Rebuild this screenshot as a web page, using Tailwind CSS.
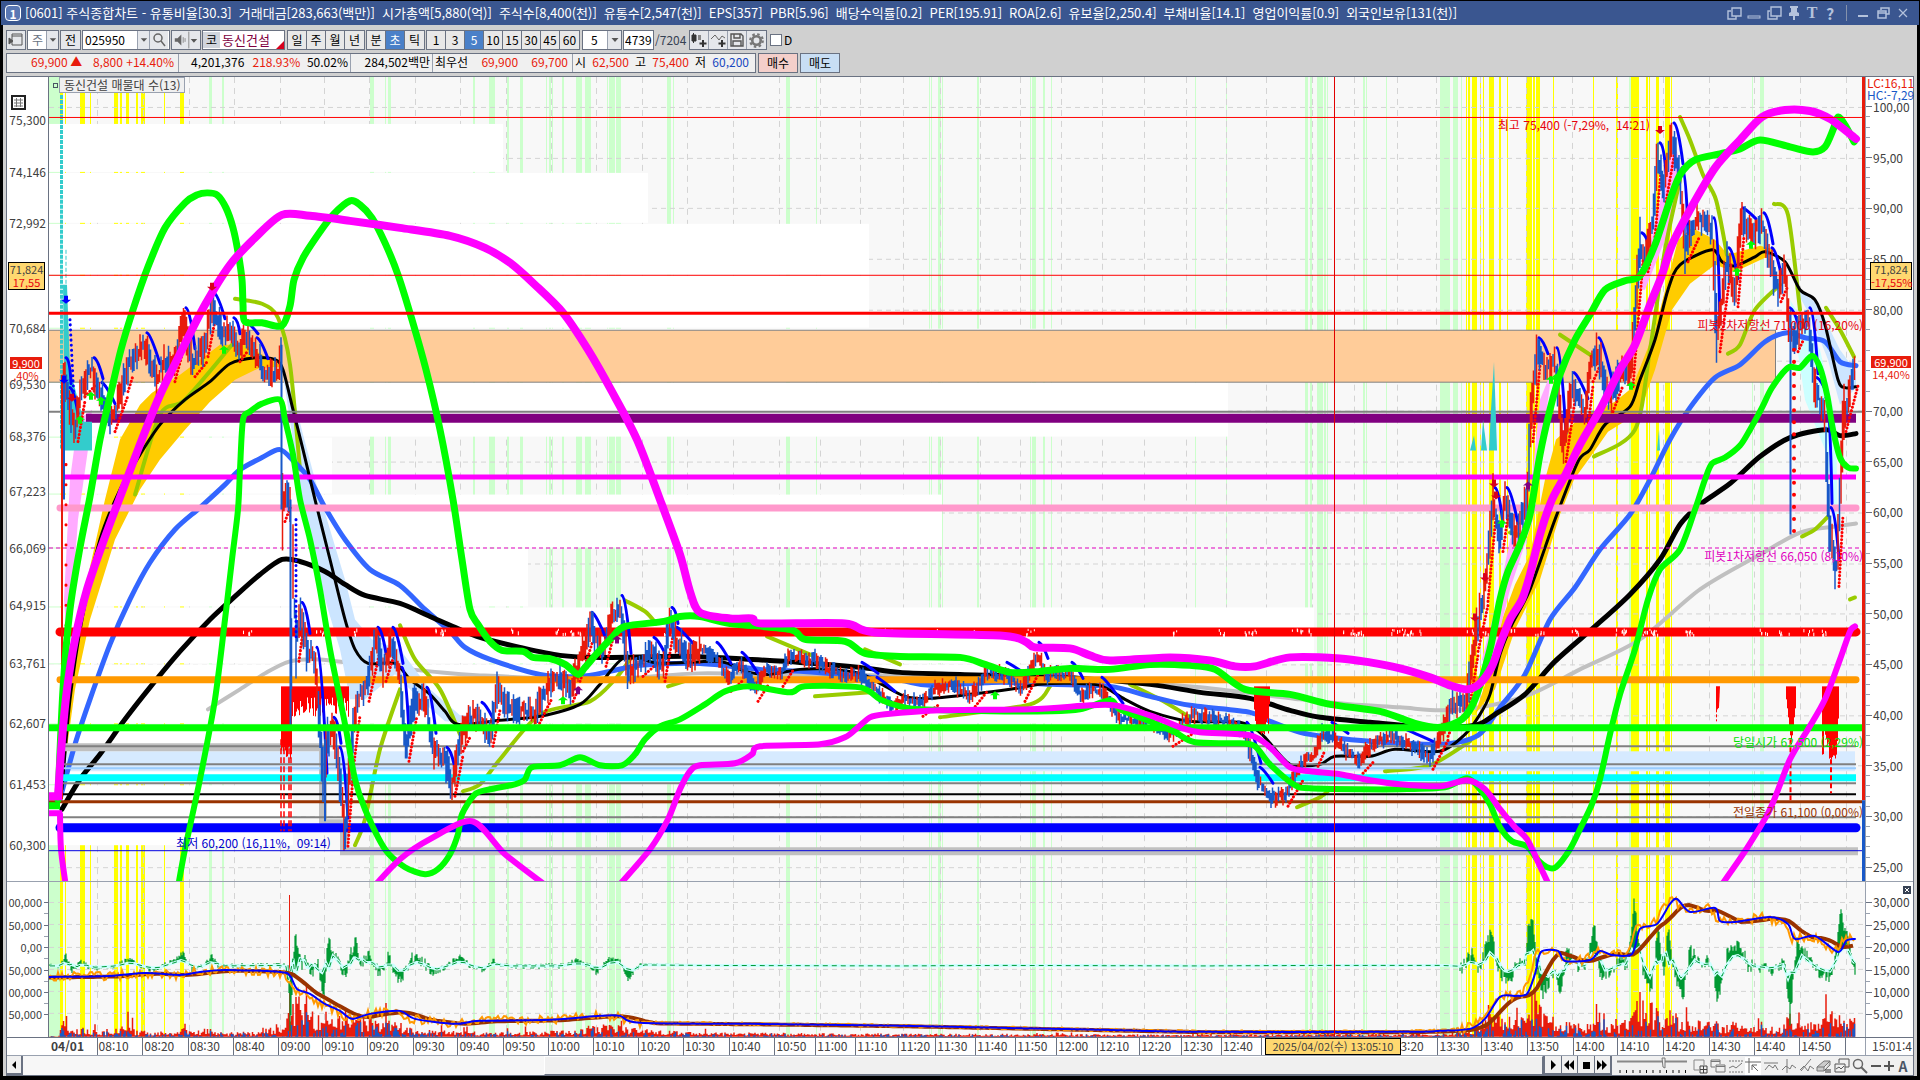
<!DOCTYPE html>
<html lang="ko">
<head>
<meta charset="utf-8">
<title>[0601] 주식종합차트</title>
<script src="https://cdn.jsdelivr.net/npm/@tailwindcss/browser@4"></script>
</head>
<body class="h-screen overflow-hidden bg-black pt-px pb-1 flex flex-col text-xs leading-4 text-black whitespace-nowrap font-['Noto_Sans_CJK_KR',sans-serif]">
<header class="h-6 shrink-0 mx-px bg-[#3a5690] text-white flex items-center pl-1 pr-2 text-[13px]">
  <span class="w-4 h-4 mr-1 rounded-sm border border-white bg-[#5a78b4] grid place-items-center text-xs font-bold">1</span>
  <h1 id="title" class="flex gap-[7px]"></h1>
  <div class="ml-auto flex items-center gap-1 text-[#b4c2dc]">
    <button aria-label="복제" class="w-4 h-4"><svg viewBox="0 0 16 16" fill="none" stroke="currentColor" stroke-width="1.4"><path d="M5 6H2v8h8v-3M6 3h9v8H6z"/></svg></button>
    <button aria-label="접기" class="w-4 h-4"><svg viewBox="0 0 16 16" fill="none" stroke="currentColor"><rect x="2" y="11" width="12" height="2"/></svg></button>
    <button aria-label="창" class="w-4 h-4"><svg viewBox="0 0 16 16" fill="none" stroke="currentColor" stroke-width="1.4"><path d="M4 6H2v8h9v-3M5 2h10v9H5z"/></svg></button>
    <button aria-label="고정" class="w-4 h-4"><svg viewBox="0 0 16 16" fill="currentColor"><path d="M4 1h8v2h-1v4l2 1v3H3V8l2-1V3H4zM7 11h2v4H7z"/></svg></button>
    <button class="w-3 font-['Liberation_Serif',serif] text-base font-bold">T</button>
    <button class="w-4 text-base font-bold">?</button>
    <span class="w-px h-4 bg-[#8592ac] mx-1"></span>
    <button aria-label="최소화" class="w-4 h-4"><svg viewBox="0 0 16 16" fill="currentColor"><rect x="3" y="10" width="10" height="2"/></svg></button>
    <button aria-label="이전 크기" class="w-4 h-4"><svg viewBox="0 0 16 16" fill="none" stroke="currentColor" stroke-width="1.5"><path d="M6 5V3h8v6h-3M3 6h8v7H3zM3 8h8"/></svg></button>
    <button aria-label="닫기" class="w-4 h-4"><svg viewBox="0 0 16 16" stroke="currentColor" stroke-width="1.2"><path d="m4 4 8 8m0-8-8 8"/></svg></button>
  </div>
</header>
<main class="flex-1 min-h-0 mx-[3px] bg-[#d0d0d0] flex flex-col pt-[5px]">
  <div id="toolbar" class="h-5 ml-[3px] flex items-stretch gap-px">
    <button aria-label="화면 목록" class="w-5 border border-gray-500 bg-gray-200 grid place-items-center"><svg class="w-4 h-4" viewBox="0 0 16 16" fill="none" stroke="#555"><path d="M4 2h10v11H4zM4 4h10"/><path d="M1 6v6l4-3z" fill="#555"/></svg></button>
    <label class="w-[32px] border border-gray-500 bg-white flex items-center text-gray-500 pl-1"><select aria-label="시장" class="appearance-none w-[14px] outline-none"><option>주</option></select><svg class="ml-auto w-[12px] h-full bg-gray-200 border-l border-gray-400" viewBox="0 0 12 18"><path d="M3 7h7l-3.500 4z" fill="#555"/></svg></label>
    <button class="w-[21px] border border-gray-500 bg-gray-200">전</button>
    <span class="w-[88px] border border-gray-500 bg-white flex"><input aria-label="종목코드" value="025950" class="w-[54px] pl-0.5 outline-none"><svg class="w-[13px] h-full bg-gray-200 border-x border-gray-400" viewBox="0 0 12 18"><path d="M3 7h7l-3.500 4z" fill="#555"/></svg><svg class="w-[18px] h-full bg-gray-200" viewBox="0 0 18 18" fill="none" stroke="#666" stroke-width="1.500"><circle cx="8" cy="7" r="4"/><path d="m11 10 4 5"/></svg></span>
    <button aria-label="소리" class="w-[30px] border border-gray-500 bg-gray-200"><svg class="w-full h-full" viewBox="0 0 30 18"><path d="M3 7h3l4-4v12l-4-4H3z" fill="#666"/><path d="M12 6v6M14 7v4" stroke="#888"/><path d="M18 0v18" stroke="#888"/><path d="M20 8h7l-3.500 4z" fill="#555"/></svg></button>
    <span class="w-[83px] border border-gray-500 bg-white flex items-center relative"><b class="w-[17px] bg-gray-300 text-center font-normal">코</b><span class="pl-0.5 text-[13px] text-[#800040]">동신건설</span><svg class="absolute right-0 bottom-0 w-2 h-2" viewBox="0 0 8 8"><path d="M8 0v8H0z" fill="#d8001c"/></svg></span>
    <div id="periods" class="flex border border-gray-500 divide-x divide-gray-500 ml-px"></div>
    <div id="kinds" class="flex border border-gray-500 divide-x divide-gray-500"></div>
    <div id="mins" class="flex border border-gray-500 divide-x divide-gray-500"></div>
    <label class="w-[40px] ml-px border border-gray-500 bg-white flex items-center pl-2"><select aria-label="주기" class="appearance-none w-[14px] outline-none"><option>5</option></select><svg class="ml-auto w-[14px] h-full bg-gray-200 border-l border-gray-400" viewBox="0 0 12 18"><path d="M3 7h7l-3.500 4z" fill="#555"/></svg></label>
    <input aria-label="표시 봉수" value="4739" class="w-[31px] border border-gray-500 bg-white pl-px outline-none">
    <span class="w-[33px] self-center text-gray-700">/7204</span>
    <div class="flex border border-gray-500 divide-x divide-gray-400 bg-gray-200">
      <button aria-label="봉 추가" class="w-[19px]"><svg viewBox="0 0 18 18"><path d="M2 4h4v6H2zM3.500 2v10" fill="#333" stroke="#333"/><path d="M8 4h3v5H8z" fill="#888"/><path d="M13 9v7M9.500 12.500h7" stroke="#333" stroke-width="2"/></svg></button>
      <button aria-label="지표 추가" class="w-[19px]"><svg viewBox="0 0 18 18" fill="none"><path d="m2 8 4-4 4 5 3-4 3 2" stroke="#666"/><path d="M13 9v7M9.500 12.500h7" stroke="#333" stroke-width="2"/></svg></button>
      <button aria-label="저장" class="w-[19px]"><svg viewBox="0 0 18 18" fill="none" stroke="#555" stroke-width="1.400"><path d="M3 3h10l2 2v10H3zM6 3v4h6V3M5 15v-5h8v5"/></svg></button>
      <button aria-label="설정" class="w-[19px]"><svg viewBox="0 0 18 18" fill="none" stroke="#777"><circle cx="9" cy="9" r="4" stroke-width="2.500"/><circle cx="9" cy="9" r="6" stroke-dasharray="2.400 2.300" stroke-width="2"/></svg></button>
    </div>
    <label class="flex items-center gap-0.5 ml-0.5"><input type="checkbox" class="appearance-none w-3 h-3 bg-white border border-gray-500">D</label>
  </div>
  <div class="h-5 mt-[3px] ml-[3px] flex gap-0.5">
    <div class="flex items-center w-[750px] border border-gray-500 bg-[#f0f0f0] divide-x divide-gray-400">
      <p class="w-[172px] h-full flex justify-between pl-6 pr-1 text-[#e81c0c]"><span>69,900 ▲</span><span>8,800 +14.40%</span></p>
      <p class="w-[172px] h-full flex justify-between pl-3 pr-0.5"><span>4,201,376</span><span><span class="text-[#e81c0c]">218.93%</span>&nbsp; 50.02%</span></p>
      <p class="w-[82px] h-full pr-0.5 text-right">284,502백만</p>
      <p class="w-[140px] h-full flex justify-between pl-0.5 pr-1"><span>최우선</span><span class="text-[#e81c0c]">69,900</span><span class="text-[#e81c0c]">69,700</span></p>
      <p class="flex-1 h-full flex justify-between pl-0.5 pr-1.5"><span>시</span><span class="text-[#e81c0c]">62,500</span><span>고</span><span class="text-[#e81c0c]">75,400</span><span>저</span><span class="text-[#1848c0]">60,200</span></p>
    </div>
    <button class="w-10 border border-gray-500 bg-[#f4cfca]">매수</button>
    <button class="w-10 border border-gray-500 bg-[#c8def4]">매도</button>
  </div>
  <section class="flex-1 min-h-0 mt-[3px] mx-[3px] border border-gray-500 bg-white flex flex-col text-[#404040]">
    <div class="flex min-h-0 basis-0 grow-[805] border-b border-gray-400">
      <div id="axL" class="w-[42px] shrink-0 border-r border-gray-500 relative flex flex-col pr-0.5">
        <button aria-label="표" class="absolute left-1 top-[18px] w-[15px] h-[15px]"><svg viewBox="0 0 15 15" fill="none" stroke="#222"><path d="M1 1h13v13H1z" stroke-width="2"/><path d="M3 5h9M3 8h9M3 11h9M5.500 3v9M9.500 3v9" stroke="#777"/></svg></button>
        <div class="absolute z-10 left-px w-[37px] top-[23%] border border-black bg-[#ffd870] text-center text-[11px] leading-[13px]"><div>71,824</div><div class="text-red-600">17,55</div></div>
        <div class="absolute z-10 left-[3px] w-[32px] top-[34.800%] leading-[12px] text-center text-[11px]"><div class="bg-[#e81c0c] text-white">9,900</div><div class="text-[#e81c0c]">,40%</div></div>
      </div>
      <div class="flex-1 min-w-0 relative overflow-hidden bg-[#f8f8f8]">
        <svg id="main" class="block w-full h-full" viewBox="49 77 1816 805" preserveAspectRatio="none"></svg>
        <span class="absolute left-1 top-[6px] w-[5px] h-[5px] border border-gray-600"></span>
        <span class="absolute left-[10px] top-0 bg-[#f0f0f0] border border-gray-400 px-1 leading-[14px]">동신건설 매물대 수(13)</span>
        <span class="absolute right-[215px] top-[5%] text-red-600">최고 75,400 (-7,29%,&nbsp; 14:21)</span>
        <span class="absolute right-0.5 top-[29.800%] text-red-600">피봇2차저항선 71,000 (16,20%)</span>
        <span class="absolute right-0.5 top-[58.600%] text-[#e000c0]">피봇1차저항선 66,050 (8,10%)</span>
        <span class="absolute right-0.5 top-[81.700%] text-[#00e000]">당일시가 62,500 (2,29%)</span>
        <span class="absolute right-0.5 top-[90.400%] text-[#993300]">전일종가 61,100 (0,00%)</span>
        <span class="absolute left-[7%] top-[94.200%] text-[#0000cc]">최저 60,200 (16,11%,&nbsp; 09:14)</span>
      </div>
      <div id="axR" class="w-[48px] shrink-0 border-l border-gray-400 relative flex flex-col">
        <div class="absolute left-px top-0 leading-3"><div class="text-[#e81c0c]">LC:16,11</div><div class="text-[#1858c8]">HC:-7,29</div></div>
        <div class="absolute z-10 left-1 w-[42px] top-[23%] border border-black bg-[#ffd870] text-center text-[11px] leading-[13px]"><div>71,824</div><div class="text-red-600">-17,55%</div></div>
        <div class="absolute z-10 left-[5px] w-10 top-[34.700%] leading-[12px] text-center text-[11px]"><div class="bg-[#e81c0c] text-white">69,900</div><div class="text-[#e81c0c]">14,40%</div></div>
      </div>
    </div>
    <div class="flex min-h-0 basis-0 grow-[155] border-b border-gray-500">
      <div id="axL2" class="w-[42px] shrink-0 border-r border-gray-500 flex flex-col text-[11px]"></div>
      <div class="flex-1 min-w-0 bg-[#f8f8f8]"><svg id="vol" class="block w-full h-full" viewBox="49 883 1816 155" preserveAspectRatio="none"></svg></div>
      <div id="axR2" class="w-[48px] shrink-0 border-l border-gray-400 relative flex flex-col"><button aria-label="지표 닫기" class="absolute right-0.5 top-1 w-2 h-2 bg-gray-700 text-white"><svg class="block" viewBox="0 0 8 8" stroke="white"><path d="m2 2 4 4m0-4-4 4"/></svg></button></div>
    </div>
    <div class="h-[18px] shrink-0 flex border-b border-gray-400 relative pl-[42px]">
      <div id="xax" class="flex flex-1 min-w-0"></div>
      <div class="w-[48px] border-l border-gray-400 pl-1.5">15:01:4</div>
      <div class="absolute left-[66%] top-0 w-[136px] h-[17px] bg-[#ffd870] border border-black text-center text-[11px] leading-[15px]">2025/04/02(수) 13:05:10</div>
    </div>
    <footer class="h-[19px] shrink-0 bg-[#f0f0f0] flex items-stretch">
      <button aria-label="왼쪽" class="w-4 border-r-2 border-b-2 border-gray-500 grid place-items-center"><svg class="w-2 h-2" viewBox="0 0 8 8"><path d="M6 0v8L2 4z"/></svg></button>
      <div class="flex-[523] bg-[#f7f7f7]"></div>
      <div class="flex-[1000] border border-white border-r-gray-500 border-b-gray-500 bg-[#f0f0f0]"></div>
      <div class="flex w-[69px] divide-x divide-gray-500 border-l-2 border-b-2 border-r-2 border-gray-500">
        <button aria-label="재생" class="flex-1 grid place-items-center"><svg class="w-3 h-3" viewBox="0 0 12 12"><path d="M4 1v10l5-5z"/></svg></button>
        <button aria-label="뒤로" class="flex-1 grid place-items-center"><svg class="w-3 h-3" viewBox="0 0 12 12"><path d="M6 1v10L1 6zM11 1v10L6 6z"/></svg></button>
        <button aria-label="정지" class="flex-1 grid place-items-center"><svg class="w-3 h-3" viewBox="0 0 12 12"><path d="M3 3h7v7H3z"/></svg></button>
        <button aria-label="앞으로" class="flex-1 grid place-items-center"><svg class="w-3 h-3" viewBox="0 0 12 12"><path d="M1 1v10l5-5zM6 1v10l5-5z"/></svg></button>
      </div>
      <svg class="w-[80px] h-[18px]" viewBox="0 0 80 18"><path d="M5 5.500h70" stroke="#888" stroke-width="2"/><path d="M8 14v3M14.500 14v3M21 14v3M28 14v3M34.500 14v3M41 14v3M48 14v3M54.500 14v3M61 14v3M67 14v3M73.500 14v3" stroke="#111"/><path d="M50 2h3v10l-2-1z" fill="#eee" stroke="#777"/></svg>
      <div class="flex items-center w-[221px] justify-between pr-1 text-gray-600">
        <button aria-label="격자 추가" class="w-4 h-4"><svg viewBox="0 0 16 16" fill="none" stroke="#888"><path d="M7 12H2V2h10v5"/><path d="M8 8h7v7H8zM8 11.500h7M11.500 8v7" stroke="#444"/></svg></button>
        <button aria-label="겹치기" class="w-4 h-4"><svg viewBox="0 0 16 16" fill="none" stroke="#777"><path d="M5 9H1V2h9v4M1 3.500h9M6 7h9v7H6zM6 8.500h9"/></svg></button>
        <button aria-label="자동 추세" class="w-4 h-4"><svg viewBox="0 0 16 16" fill="none" stroke="#777"><path d="M1 3h14M1 14h14" stroke-dasharray="2 1"/><path d="m1 10 4-2 3 2 6-5"/></svg></button>
        <button aria-label="십자선" class="w-4 h-[18px] bg-white"><svg viewBox="0 0 16 16" fill="none" stroke="#666"><path d="M0 4h16M4 0v15M13 13 7 7m0 5V7h5"/></svg></button>
        <button aria-label="수평선" class="w-4 h-4"><svg viewBox="0 0 16 16" fill="none" stroke="#777"><path d="M1 5h14M2 12l4-5 4 3 2-3 3 5"/></svg></button>
        <button aria-label="수직선" class="w-4 h-4"><svg viewBox="0 0 16 16" fill="none" stroke="#777"><path d="M6 1v14M1 12l4-4 4 3 2-4 4 3"/></svg></button>
        <button aria-label="추세선" class="w-4 h-4"><svg viewBox="0 0 16 16" fill="none" stroke="#777"><path d="M2 13 12 1M1 12l4-4 4 5 2-5 4 3" /></svg></button>
        <button aria-label="지우개" class="w-4 h-4"><svg viewBox="0 0 16 16" fill="none" stroke="#777"><path d="m1 9 7-6h6l-6 6zM1 9v4h7V9M8 13l6-6V3" fill="#ccc"/><path d="M10 11v4M12 11v4M14 11v4" stroke="#333"/></svg></button>
        <button aria-label="차트 겹침" class="w-4 h-4"><svg viewBox="0 0 16 16" fill="none" stroke="#555"><path d="M5 5V1h10v8h-4M1 6h10v8H1zM2 11l3-2 2 2 3-3"/></svg></button>
        <button aria-label="확대경" class="w-4 h-4"><svg viewBox="0 0 16 16" fill="none" stroke="#666" stroke-width="1.500"><circle cx="6" cy="6" r="4.500"/><path d="m9 9 6 6" stroke-width="2"/></svg></button>
        <button aria-label="축소" class="w-3 h-4"><svg viewBox="0 0 12 16"><path d="M1 8h10" stroke="#555" stroke-width="2"/></svg></button>
        <button aria-label="확대" class="w-3 h-4"><svg viewBox="0 0 12 16"><path d="M1 8h10M6 3v10" stroke="#555" stroke-width="2"/></svg></button>
        <button class="text-sm font-bold w-3">A</button>
      </div>
    </footer>
  </section>
</main>
<script>
const $ = id => document.getElementById(id);
let seed = 7;
const rnd = () => (seed = (seed * 16807) % 2147483647) / 2147483647;

/* title and button groups */
'[0601] 주식종합차트 - 유통비율[30.3]|거래대금[283,663(백만)]|시가총액[5,880(억)]|주식수[8,400(천)]|유통수[2,547(천)]|EPS[357]|PBR[5.96]|배당수익률[0.2]|PER[195.91]|ROA[2.6]|유보율[2,250.4]|부채비율[14.1]|영업이익률[0.9]|외국인보유[131(천)]'
  .split('|').forEach(t => $('title').insertAdjacentHTML('beforeend', `<span>${t}</span>`));
const group = (id, items, on) => $(id).innerHTML = items.map(t => `<button class="w-[19px] ${t === on ? 'bg-[#4a80c8] text-white' : 'bg-[#e8e8e8]'}">${t}</button>`).join('');
group('periods', ['일','주','월','년']);
group('kinds', ['분','초','틱'], '초');
group('mins', ['1','3','5','10','15','30','45','60'], '5');

/* axes: zero-height labels between growing spacers */
function axis(id, top, bottom, rows, right) {
  let y = top, h = '';
  rows.forEach(([p, t], i) => {
    const minor = right || id === 'axL2';
    const n = i && minor ? (id === 'axR' ? 4 : 1) : 0;
    h += `<div class="basis-0 min-h-0 flex flex-col justify-evenly ${right ? 'items-start' : 'items-end'}" style="flex-grow:${p - y}">${'<i class="w-1 h-px bg-gray-400"></i>'.repeat(n)}</div>`;
    h += right ? `<div class="h-0 flex items-center gap-px"><i class="w-[6px] h-px bg-gray-500 shrink-0"></i><span>${t}</span></div>`
      : `<div class="h-0 flex items-center justify-end gap-0.5"><span>${t}</span>${id === 'axL2' ? '<i class="w-1 h-px bg-gray-500 shrink-0"></i>' : ''}</div>`;
    y = p;
  });
  $(id).insertAdjacentHTML('beforeend', h + `<div class="basis-0" style="flex-grow:${bottom - y}"></div>`);
}
axis('axL', 77, 882, [[120,'75,300'],[172,'74,146'],[223,'72,992'],[328,'70,684'],[384,'69,530'],[436,'68,376'],[491,'67,223'],[548,'66,069'],[606,'64,915'],[664,'63,761'],[724,'62,607'],[785,'61,453'],[846,'60,300']]);
axis('axR', 77, 882, Array.from({length:16}, (_, i) => [107 + i * 50.73, (100 - i * 5) + ',00']).filter(r => r[1] !== '75,00'), true);
axis('axL2', 883, 1038, [[903,'00,000'],[926,'50,000'],[948,'0,00'],[971,'50,000'],[993,'00,000'],[1015,'50,000']]);
axis('axR2', 883, 1038, [[903,'30,000'],[926,'25,000'],[948,'20,000'],[971,'15,000'],[993,'10,000'],[1015,'5,000']], true);
const gx = [97,143,189,234,280,324,369,415,460,506,551,596,642,687,733,779,820,860,903,940,980,1020,1061,1102,1144,1186,1226,1266,1312,1354,1397,1436,1480,1526,1572,1617,1663,1709,1754,1800,1846];
const times = '08:10 08:20 08:30 08:40 09:00 09:10 09:20 09:30 09:40 09:50 10:00 10:10 10:20 10:30 10:40 10:50 11:00 11:10 11:20 11:30 11:40 11:50 12:00 12:10 12:20 12:20 12:40'.split(' ');
/* from the ninth hour on there is one label every ten minutes; the cursor stamp hides three of them */
for (let i = 4, t = 540; i < gx.length - 1; i++, t += 10) times[i] = String(t / 60 | 0).padStart(2, '0') + ':' + String(t % 60).padStart(2, '0');
times[27] = times[28] = times[29] = ''; times[30] = '3:20';
let xh = `<div class="basis-0 min-w-0 font-bold pl-0.5" style="flex-grow:48">04/01</div>`;
gx.forEach((x, i) => xh += `<div class="basis-0 min-w-0 border-l border-gray-500 ${i === 30 ? 'pl-2' : 'pl-px'}" style="flex-grow:${(gx[i + 1] || 1865) - x}">${times[i] || ''}</div>`);
$('xax').innerHTML = xh;

/* drawing helpers */
const pts = s => s.trim().split(/\s+/).map(p => p.split(',').map(Number));
function smooth(P) {
  let d = `M${P[0]}`;
  for (let i = 0; i < P.length - 1; i++) {
    const a = P[i - 1] || P[i], b = P[i], c = P[i + 1], e = P[i + 2] || c;
    d += `C${b[0] + (c[0] - a[0]) / 7},${b[1] + (c[1] - a[1]) / 7} ${c[0] - (e[0] - b[0]) / 7},${c[1] - (e[1] - b[1]) / 7} ${c}`;
  }
  return d;
}
const curve = (c, w, s, x = '') => `<path d="${smooth(pts(s))}" fill="none" stroke="${c}" stroke-width="${w}" stroke-linejoin="round" stroke-linecap="round" ${x}/>`;
const rect = (c, x1, x2, y1, y2) => `<rect x="${x1}" y="${y1}" width="${x2 - x1}" height="${y2 - y1}" fill="${c}"/>`;
const hl = (c, w, y, x1 = 60, x2 = 1856, cap = 'butt', x = '') => `<path d="M${x1} ${y}H${x2}" stroke="${c}" stroke-width="${w}" stroke-linecap="${cap}" ${x}/>`;
const area = (c, s) => `<path d="M${s.trim().replace(/\s+/g, 'L')}Z" fill="${c}"/>`;
const at = (P, x) => { let i = 1; while (i < P.length - 1 && P[i][0] < x) i++; const a = P[i - 1], b = P[i]; return a[1] + (b[1] - a[1]) * Math.max(0, Math.min(1, (x - a[0]) / (b[0] - a[0]))); };

const green = [[49,60],[209,212],[222,224],[370,374],[385,386],[388,391],[473,475],[489,495],[507,509],[520,523],[546,547],[549,551],[552,553],[562,564],[576,582],[585,591],[607,608],[609,615],[616,621],[667,671],[673,674],[786,790],[816,817],[929,930],[931,932],[938,941],[942,943],[977,979],[1030,1031],[1032,1036],[1043,1045],[1051,1052],[1195,1196],[1226,1227],[1305,1308],[1310,1312],[1317,1323],[1324,1326],[1327,1328],[1363,1365],[1366,1367],[1386,1387],[1440,1450],[1453,1458],[1461,1462],[1629,1631],[1752,1753],[1760,1764]];
const yellow = [[60,63],[65,66],[80,85],[90,91],[114,118],[120,122],[126,129],[136,138],[141,145],[164,165],[180,184],[1466,1467],[1468,1470],[1472,1477],[1480,1481],[1483,1484],[1489,1494],[1499,1501],[1507,1508],[1526,1532],[1533,1535],[1536,1540],[1553,1554],[1593,1594],[1616,1618],[1631,1639],[1646,1648],[1649,1650],[1656,1659],[1665,1670],[1671,1672]];
const back = (t, b, ys) => green.map(r => rect('#ccffcc', ...r, t, b)).join('') + yellow.map(r => rect('#ffff00', ...r, t, b)).join('')
  + gx.map(x => `<path d="M${x}.5 ${t}V${b}" stroke="#d4d4d4" stroke-dasharray="6 5"/>`).join('')
  + ys.map(y => hl('#d4d4d4', 1, y + .5, 49, 1865, 'butt', 'stroke-dasharray="5 4"')).join('');

/* main panel */
let m = back(77, 882, Array.from({length:16}, (_, i) => Math.round(107 + i * 50.73)));
[[124,172,503],[173,223,648],[224,275,869],[276,328,869],[329,382,1228],[383,437,1228],[438,494,332],[495,548,942],[549,607,528],[608,664,1314],[665,724,1190],[725,785,888],[786,846,293]].forEach(([a, b, x]) => m += rect('#ffffff', 49, x, a, b));
m += `<rect x="48.500" y="330.500" width="1727" height="52" fill="#ffcc99" stroke="#808080"/>`;
m += rect('#d6eaff', 60, 1855, 752, 772);
m += curve('#c0c0c0', 4, '208,710 240,690 265,674 290,662 320,660 360,665 430,672 480,676 600,680 700,674 800,676 940,676 1100,681 1200,688 1300,700 1350,705 1400,708 1440,711 1480,708 1530,695 1580,670 1640,640 1700,590 1760,555 1800,533 1835,527 1856,524');
m += area('#ffcc00', '60,800 70,680 85,590 105,500 120,440 140,405 152,393 180,375 220,345 245,345 283,367 260,368 235,380 210,402 185,430 160,460 140,490 115,540 90,620 75,690');
m += area('#ffcc00', '1475,715 1490,670 1502,620 1515,585 1530,555 1545,480 1556,440 1580,418 1615,402 1632,388 1655,330 1678,240 1692,228 1715,240 1728,255 1760,246 1775,250 1765,258 1735,272 1715,265 1690,284 1672,310 1655,370 1640,412 1608,432 1590,458 1574,480 1560,515 1540,580 1515,630 1495,690');
m += area('#cce5ff', '283,375 293,395 303,435 315,480 330,530 345,580 355,620 372,640 400,650 430,690 460,716 480,715 480,724 445,722 420,700 395,675 365,700 350,700 340,650 325,600 305,520');
m += area('#cce5ff', '1795,288 1815,302 1830,330 1840,350 1856,372 1856,388 1840,405 1828,360 1812,320');
m += area('#ffaaff', '64,600 70,480 78,420 92,410 88,450 78,520 68,660');
m += area('#ffaaff', '1500,590 1510,540 1530,500 1540,400 1552,370 1548,400 1533,520 1510,590 1490,670 1482,660');
m += area('#ffaaff', '1640,290 1665,180 1675,140 1682,180 1665,240 1645,290');
m += area('#ccffff', '1790,300 1805,400 1825,450 1838,540 1836,420 1820,350');
['235,299 262,304 278,318 290,365 300,470','400,626 415,660 440,690 460,735','355,846 365,820 380,750 400,690','463,792 480,785 500,760 540,715 590,702 615,680 630,660','625,601 645,612 656,624','767,637 812,656','668,687 690,680','815,697 870,693','865,650 900,665','940,718 1030,705 1050,687','1130,685 1160,700 1190,718','1297,808 1320,798 1330,790','1385,772 1430,766 1470,742','135,495 160,415 185,400 232,345','1560,335 1593,357','1594,457 1635,430 1650,350 1665,250 1680,180','1680,117 1690,140 1703,175 1716,200 1727,255','1728,354 1740,345 1755,310 1780,285','1774,204 1788,215 1800,310','1826,308 1840,330 1854,357','1802,537 1815,530 1828,517','1850,600 1855,598','1510,533 1525,537'].forEach(s => m += curve('#99cc00', 4, s));
m += curve('#3366ff', 5, '60,800 75,745 90,700 110,645 130,600 150,563 175,530 200,508 225,485 240,470 262,458 280,450 295,463 310,480 325,508 345,540 370,570 400,586 425,610 450,632 465,648 490,660 540,675 580,677 610,672 640,666 700,664 760,670 800,672 850,676 900,681 930,686 1000,683 1050,685 1110,687 1150,697 1190,706 1250,713 1270,722 1300,733 1330,738 1370,742 1440,745 1478,736 1500,708 1525,675 1550,620 1575,588 1600,550 1630,515 1650,480 1670,440 1690,408 1715,378 1740,365 1765,342 1787,333 1805,338 1825,342 1840,362 1856,366');
m += curve('#000000', 5, '62,810 80,780 100,755 125,720 150,688 180,652 210,620 235,597 260,575 282,560 300,562 325,572 345,585 365,596 400,604 430,617 455,628 480,638 520,648 560,656 600,658 690,657 750,660 800,663 860,668 900,673 960,675 1080,679 1150,685 1200,693 1250,699 1290,711 1320,718 1370,723 1430,728 1475,726 1495,715 1525,695 1555,662 1595,627 1630,595 1660,560 1680,525 1700,505 1730,484 1760,457 1790,438 1825,430 1840,436 1856,434');
m += curve('#000000', 3, '62,790 70,700 82,620 100,540 120,490 140,455 160,425 185,400 210,382 230,364 255,358 275,360 283,370 293,410 303,450 315,500 330,560 345,620 355,650 368,664 395,664 410,680 430,695 445,712 458,725 500,721 540,717 580,705 600,685 625,658 660,664 720,662 745,672 770,675 800,670 830,670 860,674 880,684 905,697 930,699 970,695 1010,690 1040,685 1070,684 1100,686 1125,700 1150,712 1190,722 1240,723 1262,735 1290,765 1320,765 1335,757 1370,757 1395,750 1440,752 1465,735 1480,715 1490,695 1500,655 1512,625 1530,590 1555,520 1578,462 1590,450 1605,425 1630,407 1640,380 1655,340 1668,290 1680,265 1712,250 1722,262 1735,266 1755,257 1765,252 1785,262 1800,290 1815,300 1825,325 1838,380 1845,388 1856,387');
m += `<path d="M60 748H323V824H344V852H1858" fill="none" stroke="#c0c0c0" stroke-width="8"/>`;
/* horizontal levels */
m += hl('#800080', 9, 418.5, 86) + hl('#808080', 2, 412, 49, 1862) + hl('#ff00ff', 5, 477.5, 62) + hl('#ff99cc', 7, 508.5, 60, 1856, 'round')
  + hl('#e000c0', 1, 548.5, 49, 1862, 'butt', 'stroke-dasharray="4 3"') + hl('#ff0000', 9, 632.5, 60, 1856, 'round') + hl('#ff9900', 7, 680.5, 60, 1856, 'round')
  + hl('#808080', 2, 747) + hl('#808080', 2, 765) + hl('#99ccff', 2, 769) + hl('#00ffff', 7, 778.5) + hl('#808080', 2, 784) + hl('#000000', 2, 795)
  + hl('#993300', 3, 802.5, 49, 1862) + hl('#808080', 2, 818) + hl('#0000ff', 9, 828.5, 60, 1856, 'round');
/* white traces left on the band */
for (let i = 0; i < 45; i++) { const x0 = 240 + rnd() * 1590; for (let k = 0; k < 5; k++) { const x = x0 + rnd() * 12, y = 629 + rnd() * 6; m += rect('#ffffff', x, x + 1, y, y + 2 + rnd() * 2); } }
/* hanging red bars */
for (let x = 281; x < 349; x++) m += rect('#ff0000', x, x + 1, 687, x < 292 ? 740 + rnd() * 20 : 698 + rnd() * 20);
for (const x of [281, 284, 289, 291]) m += `<path d="M${x} 740V832" stroke="#ff0000" stroke-width="1.500" stroke-dasharray="6 3"/>`;
for (let x = 1254; x < 1270; x++) m += rect('#ff0000', x, x + 1, 687, 735 - Math.abs(x - 1261) * 4 * rnd());
m += area('#ff0000', '1716,687 1720,687 1719,708 1716,712') + '<path d="M1716.500 705V722" stroke="#ff0000" stroke-dasharray="3 2"/>';
for (let x = 1786; x < 1796; x++) m += rect('#ff0000', x, x + 1, 687, 745 - Math.abs(x - 1791) * 9);
for (let x = 1822; x < 1839; x++) m += rect('#ff0000', x, x + 1, 687, 760 - Math.abs(x - 1831) * 6 * rnd());
m += '<path d="M1790.500 740V802M1831 760V794" stroke="#ff0000" stroke-width="2" stroke-dasharray="5 3"/>';
/* teal volume-at-price spikes */
m += area('#33cccc', '63,285 67,285 70,370 78,400 84,422 92,422 92,451 65,451');
m += '<path d="M61.500 95V450" stroke="#33cccc" stroke-width="3" stroke-dasharray="4 1"/><path d="M66 250V290" stroke="#33cccc" stroke-dasharray="4 2"/>';
m += area('#33cccc', '1489,451 1491,410 1494,362 1496,420 1497,451') + area('#33cccc', '1481,451 1483,420 1487,451') + area('#33cccc', '1470,451 1474,436 1476,451') + area('#33cccc', '1657,451 1659,430 1660,451');
/* price bars */
const price = pts('62,420 64,370 68,400 75,430 82,385 92,370 100,395 112,420 125,380 130,360 140,350 145,345 157,380 165,360 172,370 184,320 192,365 205,345 212,305 222,335 232,330 237,350 245,335 255,350 265,375 278,370 281,350 282,510 288,490 290,500 291,690 293,560 296,650 300,615 307,650 315,660 324,790 327,740 332,730 338,760 345,835 350,760 357,700 366,690 376,640 383,670 391,640 400,680 406,750 414,700 425,700 433,750 445,760 452,785 460,740 468,720 480,715 490,735 497,695 510,705 525,710 535,715 548,685 560,680 570,690 577,670 590,625 603,655 612,615 620,608 628,670 640,665 652,650 662,670 670,620 675,640 690,660 700,650 715,655 728,680 740,665 755,690 765,670 780,675 790,655 805,660 815,660 830,670 845,675 860,675 875,690 892,708 905,700 920,705 935,690 955,685 970,698 985,675 1005,675 1022,690 1037,655 1045,675 1070,675 1080,695 1100,690 1120,720 1150,722 1170,735 1195,715 1230,722 1245,735 1258,780 1270,800 1285,795 1300,765 1315,755 1322,735 1330,735 1345,750 1360,762 1372,745 1390,735 1400,740 1430,758 1445,725 1452,705 1465,705 1475,640 1485,590 1493,500 1500,540 1505,500 1515,540 1527,500 1530,430 1537,350 1545,370 1555,360 1563,450 1572,385 1585,415 1590,370 1597,350 1610,400 1620,370 1630,375 1640,245 1645,260 1652,225 1658,155 1663,190 1672,135 1680,180 1685,250 1697,220 1712,230 1717,340 1727,260 1735,295 1741,220 1753,235 1762,225 1770,260 1778,290 1785,270 1788,320 1795,340 1800,325 1808,320 1815,390 1824,410 1829,520 1836,575 1840,500 1843,420 1855,370');
let red = '', blue = '';
for (let x = 62; x < 1856; x += 1.5) {
  const y = at(price, x), dy = y - at(price, x - 2), calm = x > 700 && x < 1440 ? .5 : .9;
  const h = Math.min(30, Math.abs(dy) / 2) + (4 + rnd() * 12) * calm, o = (rnd() - .5) * 12 * calm, seg = `M${x.toFixed(1)} ${(y - h + o).toFixed(1)}V${(y + h + o).toFixed(1)}`;
  if (rnd() > .5 + (dy < 0 ? -.12 : .12)) red += seg; else blue += seg;
}
/* trailing dots above falls and below rises */
let up = '', dn = '';
for (let i = 1; i < price.length; i++) {
  const [x1, y1] = price[i - 1], [x2, y2] = price[i], far = Math.abs(y2 - y1);
  if (x2 - x1 < 4 || far < 14 || far > 130) continue;
  if (y2 > y1) up += `M${x1 + 2} ${y1 - 12}Q${x1 + 6} ${y1 - 10} ${x2 + 3} ${y2 - 16}`;
  else dn += `M${x1 + 3} ${y1 + 12}L${x2 + 3} ${y2 + 16}`;
}
m += `<path d="${up}" stroke="#0000ff" stroke-width="3" stroke-linecap="round" fill="none"/><path d="${dn}" stroke="#ff0000" stroke-width="3" stroke-dasharray="0.1 3.500" stroke-linecap="round" fill="none"/>`;
m += `<path d="${red}" stroke="#e81c0c" stroke-width="1.500"/><path d="${blue}" stroke="#1858c8" stroke-width="1.500"/>`;
m += '<path d="M62 375V800" stroke="#e81c0c" stroke-width="2"/><path d="M64 375V500" stroke="#1858c8" stroke-width="2"/><path d="M66 465V700" stroke="#ff0000" stroke-width="3" stroke-linecap="round" stroke-dasharray="0.1 20"/><path d="M290.500 500V730M281.500 345V510M1790.500 310V535" stroke="#1858c8" stroke-width="2"/><path d="M1794 350V540" stroke="#ff0000" stroke-width="4" stroke-linecap="round" stroke-dasharray="0.1 12"/>';
m += '<path d="M325 740V822M345 820V850" stroke="#1858c8" stroke-width="2"/><path d="M70 320L74 400M296 520V640" stroke="#0000ff" stroke-width="3" stroke-linecap="round" stroke-dasharray="0.1 5" fill="none"/>';
/* bands over the price */
m += hl('#00ff00', 7, 728.5, 49, 1863);
m += rect('#00ff00', 49, 60, 803, 810);
m += curve('#00ff00', 7, '58,800 63,690 70,610 80,548 90,497 100,440 110,397 121,350 133,310 148,267 165,228 185,203 197,195 207,193 217,195 226,208 233,228 238,252 242,280 243,305 245,322 262,323 282,326 290,306 294,280 303,258 320,232 333,215 350,201 360,205 372,218 385,243 398,275 412,320 426,370 440,430 453,500 462,560 470,610 478,625 490,642 502,651 523,652 533,658 549,659 565,665 578,675 585,668 597,654 612,638 625,627 664,622 680,617 700,617 730,624 790,630 805,640 845,642 865,654 900,657 960,658 985,665 1010,673 1040,672 1070,669 1110,670 1150,665 1190,666 1215,670 1245,690 1290,695 1330,705 1380,712 1415,724 1440,728 1462,720 1475,700 1490,650 1500,600 1508,572 1520,545 1530,515 1540,455 1550,410 1560,375 1575,340 1590,315 1605,290 1625,281 1640,276 1655,245 1670,200 1680,175 1695,160 1720,154 1740,149 1760,140 1790,147 1813,152 1825,147 1833,130 1838,117 1845,125 1854,142');
m += curve('#00ff00', 6, '178,888 185,850 200,780 215,700 225,620 232,560 238,510 240,470 243,420 250,412 262,404 280,400 285,420 293,455 300,500 310,540 320,590 330,650 338,690 346,730 355,780 365,810 385,850 405,868 425,875 438,870 450,855 458,835 462,815 475,795 490,790 515,785 525,780 532,768 560,766 580,758 600,766 622,766 635,755 645,740 660,727 680,720 705,705 725,692 750,687 790,693 805,687 860,688 880,700 900,707 920,710 990,712 1050,712 1080,710 1110,701 1120,710 1150,722 1175,733 1195,743 1240,744 1255,747 1270,765 1295,786 1310,789 1360,790 1400,790 1445,788 1467,779 1480,790 1490,805 1500,828 1512,842 1527,847 1537,860 1547,868 1556,868 1570,850 1580,830 1592,805 1600,780 1610,735 1620,695 1635,650 1648,600 1660,570 1680,550 1695,510 1705,480 1712,464 1725,458 1740,446 1750,430 1762,408 1772,388 1788,368 1800,368 1812,356 1820,368 1827,395 1833,430 1840,458 1848,468 1856,469');
m += rect('#ff00ff', 49, 62, 793, 801) + rect('#ff00ff', 49, 62, 811, 817);
m += curve('#ff00ff', 8, '58,797 62,740 67,690 75,640 87,590 103,543 121,495 138,450 158,400 182,350 205,305 230,265 255,238 282,215 310,216 350,221 400,228 450,236 485,248 510,263 535,285 563,313 588,350 612,392 637,440 660,500 680,555 690,592 700,613 730,619 752,619 762,624 845,624 875,633 1000,636 1025,642 1035,648 1070,649 1090,656 1110,661 1170,658 1210,661 1235,667 1255,667 1290,658 1340,659 1370,663 1400,669 1430,678 1450,686 1467,690 1480,684 1492,667 1500,645 1510,620 1522,600 1530,575 1540,535 1552,500 1565,476 1580,445 1600,410 1620,370 1635,345 1650,305 1662,275 1672,245 1690,210 1715,168 1740,140 1762,117 1785,110 1810,111 1830,119 1856,139');
m += curve('#ff00ff', 6, '60,815 61,850 66,888') + curve('#ff00ff', 6, '376,885 400,860 430,840 472,822 505,855 544,885');
m += curve('#ff00ff', 6, '620,885 650,850 668,820 680,790 690,772 700,766 735,764 752,755 760,747 820,745 845,738 858,728 870,718 885,715 940,711 1030,710 1090,706 1115,706 1150,716 1180,728 1200,733 1250,736 1270,748 1290,768 1310,772 1340,775 1370,781 1400,785 1440,787 1467,781 1485,790 1500,810 1515,828 1527,840 1540,867 1550,888');
m += curve('#ff00ff', 6, '1720,888 1745,852 1770,810 1790,760 1808,730 1825,700 1840,660 1850,632 1855,627');
m += hl('#ff0000', 1, 117.5, 49, 1862) + hl('#ff0000', 1, 275.5, 49, 1862) + hl('#ff0000', 3, 313.5, 49, 1862) + hl('#0000e0', 1, 851.5, 49, 1862);
/* signal arrows */
const arrow = (c, x, y, d) => `<path d="M${x} ${y}l${-5} ${-4 * d}h3v${-4 * d}h4v${4 * d}h3z" fill="${c}"/>`;
[[66,304,'#0000ff'],[64,384,'#0000ff'],[212,291,'#d8001c'],[72,402,'#d8001c'],[1660,134,'#d8001c'],[1475,622,'#d8001c'],[1485,582,'#d8001c'],[1494,488,'#d8001c'],[1496,500,'#d8001c']].forEach(([x, y, c]) => m += arrow(c, x, y, 1));
[[91,392],[101,397],[80,416],[224,346],[1551,376],[1556,374],[1631,382],[1737,268],[1751,241],[1502,520],[995,692],[563,697]].forEach(([x, y]) => m += arrow('#00ff00', x, y, -1));
[[1528,482],[578,687],[617,636]].forEach(([x, y]) => m += arrow('#800080', x, y, -1));
m += '<path d="M1334.500 77V882" stroke="#e00000"/>' + rect('#e81c0c', 1862, 1865, 77, 801) + rect('#1858c8', 1862, 1865, 801, 882);
$('main').innerHTML = m;

/* volume panel */
let v = back(883, 1038, [903, 925, 948, 970, 992, 1014]);
const env = pts('60,4 62,12 66,20 70,7 80,8 90,8 110,4 128,14 135,6 180,4 184,14 190,5 210,9 215,5 260,4 280,14 288,18 291,60 293,40 300,38 310,22 325,24 335,20 350,18 380,16 400,13 415,7 430,6 500,4 570,6 590,10 615,12 640,7 700,4 900,3 1200,2 1440,3 1470,6 1480,16 1490,30 1500,22 1520,14 1528,45 1535,42 1545,22 1560,16 1580,12 1600,16 1620,11 1632,20 1640,42 1660,22 1670,32 1680,16 1715,14 1735,14 1760,8 1780,10 1790,24 1800,9 1825,18 1840,28 1855,16');
let vr = '', vb = '';
for (let x = 50; x < 1856; x += 1.5) {
  const e = x < 60 ? 1 : at(env, x), h = e * (.25 + rnd() * .9) + (rnd() > .96 ? e * 1.2 : 0);
  vr += `M${x} 1038v${-h.toFixed(1)}`; if (rnd() > .4) vb += `M${x} 1038v${-(h * rnd() * .9).toFixed(1)}`;
}
v += `<path d="${vr}" stroke="#e81c0c" stroke-width="1.500"/><path d="${vb}" stroke="#1858c8" stroke-width="1.500"/><path d="M289.500 896V1038" stroke="#e81c0c"/>`;
const osc = pts('49,967 60,967 66,956 72,972 82,962 90,970 115,967 130,960 140,967 155,972 183,954 192,971 205,965 212,956 218,967 280,966 288,970 290,1030 292,1000 295,935 302,970 306,956 311,978 317,960 324,1000 328,940 336,956 340,965 345,980 350,955 356,942 361,965 368,955 380,975 388,958 400,983 412,958 425,965 432,975 445,968 460,957 470,967 484,972 492,962 505,967 560,967 575,962 590,966 596,974 612,958 620,962 628,980 640,965 700,966 900,967 1000,966 1200,967 1320,966 1440,966 1462,968 1472,955 1480,972 1485,952 1492,930 1497,965 1500,975 1510,980 1520,960 1526,965 1528,925 1533,915 1536,965 1543,995 1555,970 1560,1000 1568,945 1576,968 1587,966 1594,920 1600,975 1610,975 1618,962 1628,965 1634,905 1640,950 1645,985 1652,990 1658,925 1664,978 1668,930 1675,980 1683,1000 1690,950 1700,965 1712,962 1717,1005 1728,950 1740,945 1748,966 1770,972 1785,962 1790,1020 1797,940 1808,960 1820,975 1832,978 1841,915 1850,950 1855,972');
const env2 = x => x < 280 ? 5 : x < 440 ? 12 : x < 640 ? 6 : x < 1460 ? 1.5 : 14;
let o = '', o2 = '';
for (let x = 50; x < 1856; x += 1) { const y = at(osc, x), s = (at(osc, x - 5) + at(osc, x + 2)) / 2; o += `M${x} ${((s + 967) / 2).toFixed(1)}V${(y + (rnd() - .5) * env2(x)).toFixed(1)}`; o2 += `${o2 ? 'L' : 'M'}${x} ${((s + 967) / 2).toFixed(1)}`; }
v += `<path d="${o}" stroke="#009933" stroke-width="1.200"/><path d="${o2}" stroke="#ccffff" stroke-width="3" fill="none"/><path d="${o2}" stroke="#009933" stroke-width="1" stroke-dasharray="5 4" fill="none"/>`;
const tr = '49,978 110,977 145,974 180,976 200,973 225,971 280,973 290,977 297,990 310,995 325,1005 340,1012 352,1020 370,1015 400,1012 415,1020 455,1025 480,1022 550,1021 600,1017 620,1017 640,1024 750,1025 900,1027 1000,1029 1100,1031 1200,1033 1400,1033 1440,1032 1470,1030 1485,1020 1500,998 1515,997 1527,995 1535,975 1541,953 1558,952 1565,962 1590,961 1600,952 1612,956 1632,955 1640,930 1657,925 1670,905 1677,900 1690,913 1715,909 1720,922 1735,923 1770,918 1788,925 1795,940 1815,937 1838,953 1846,942 1855,940';
const T = pts(tr); let og = '';
for (let x = 50; x < 1856; x += 2) og += `${og ? 'L' : 'M'}${x} ${(at(T, x + 4) + (rnd() - .5) * (x > 640 && x < 1460 ? 3 : 9)).toFixed(1)}`;
let br = ''; for (let x = 49; x < 1856; x += 4) { let s = 0; for (let k = 0; k < 8; k++) s += at(T, Math.max(49, x - k * 3)); br += `${br ? 'L' : 'M'}${x} ${(s / 8 + .5).toFixed(1)}`; }
v += `<path d="${br}" stroke="#993300" stroke-width="4" fill="none"/><path d="${og}" stroke="#ff9900" stroke-width="2" fill="none"/>` + curve('#0000ff', 2, tr);
v += '<path d="M1334.500 883V1038" stroke="#e00000"/>';
$('vol').innerHTML = v;
</script>
</body>
</html>
